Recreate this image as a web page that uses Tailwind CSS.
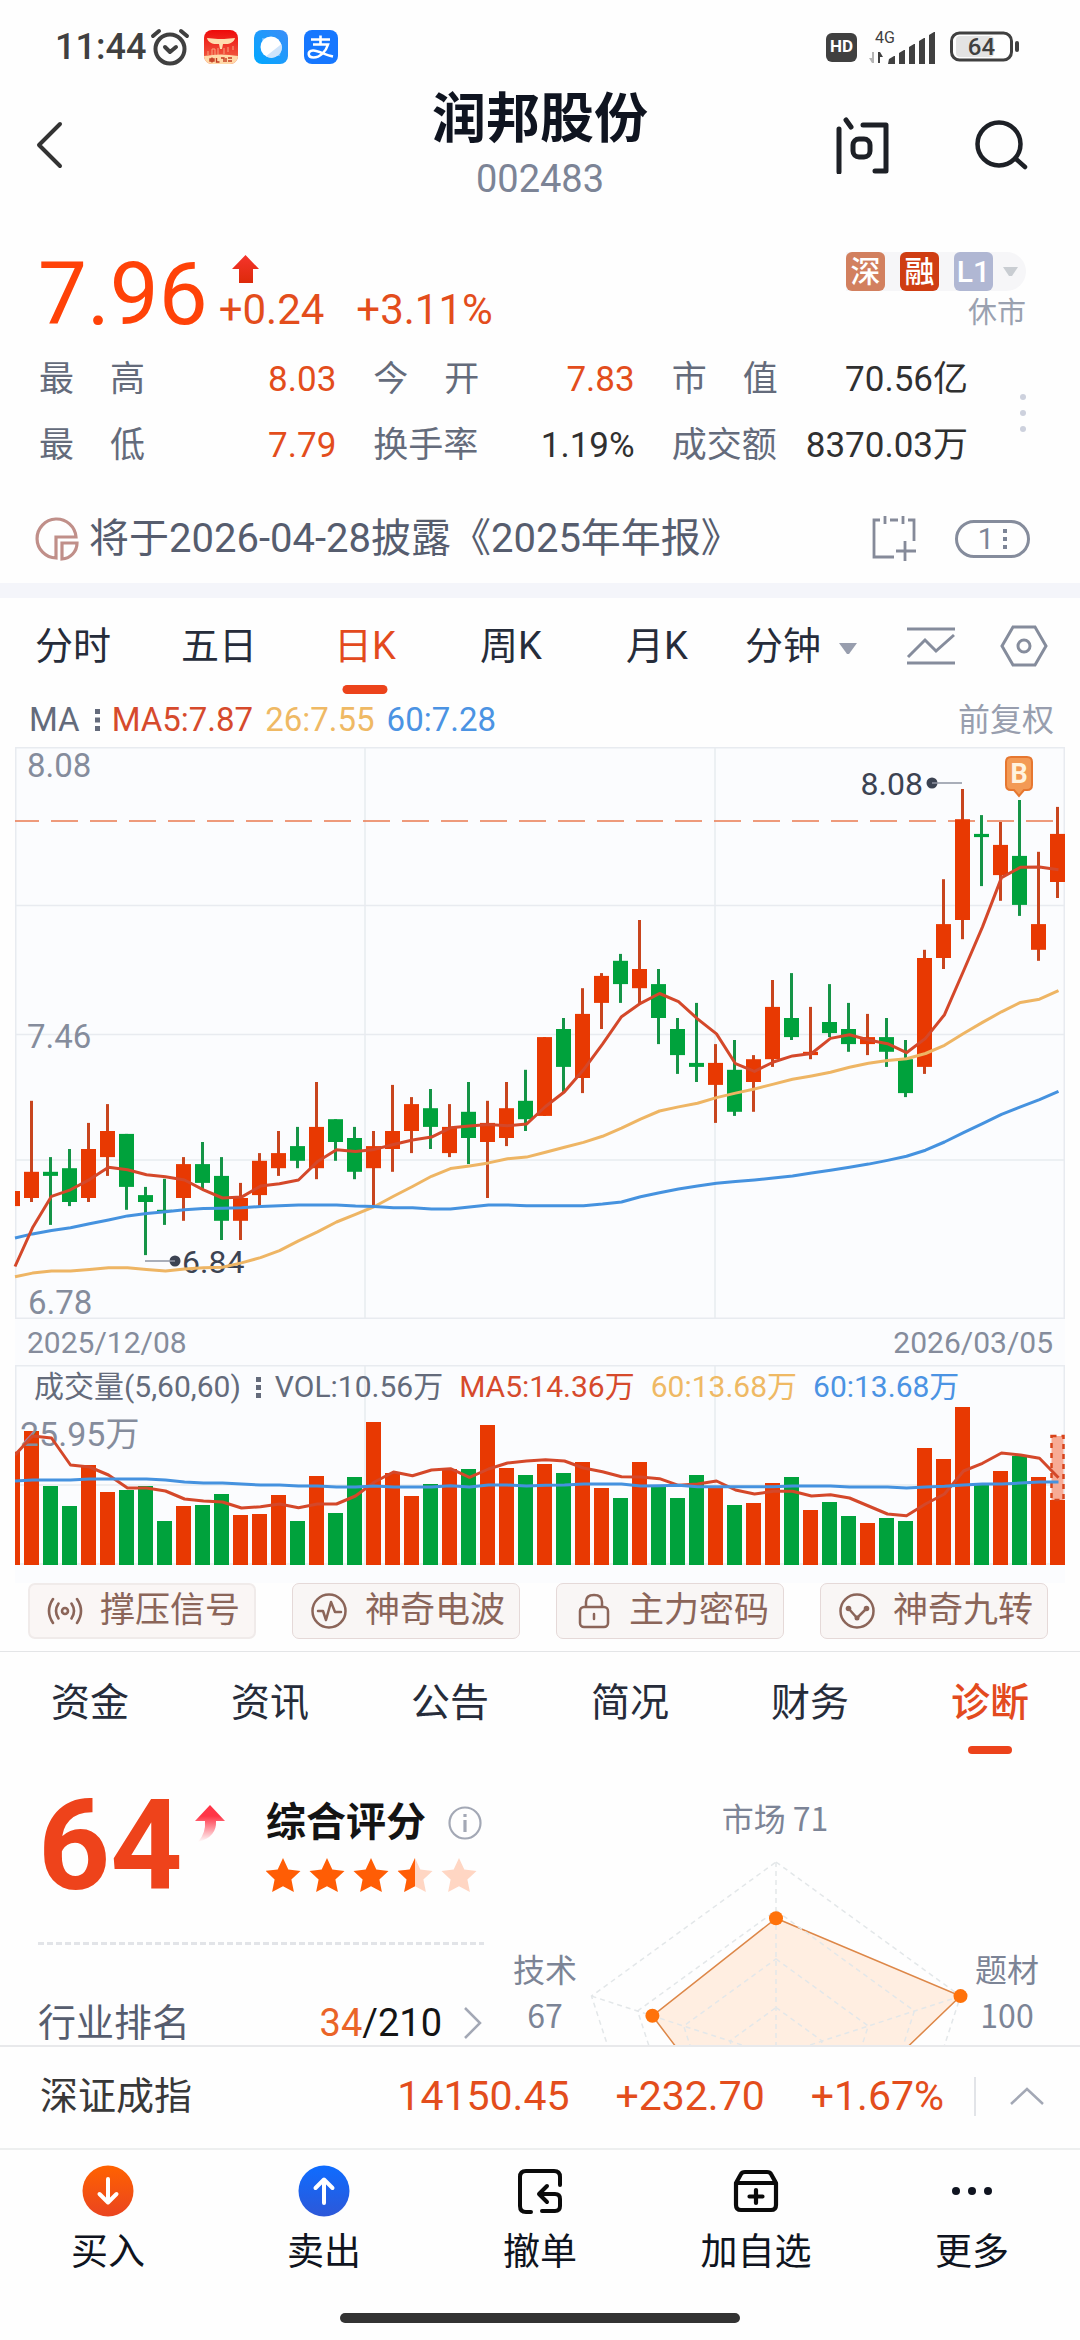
<!DOCTYPE html>
<html lang="zh-CN">
<head>
<meta charset="utf-8">
<meta name="viewport" content="width=device-width, initial-scale=1">
<title>润邦股份 002483</title>
<script src="https://cdn.jsdelivr.net/npm/@tailwindcss/browser@4"></script>
</head>
<body class="bg-[#fefefe] font-['Roboto','Noto_Sans_CJK_SC',sans-serif] text-[#262c3a]">
<div class="flex h-screen flex-col overflow-hidden">

  <!-- system status bar -->
  <div class="flex h-[85px] shrink-0 items-center justify-between pt-[9px] pr-[60px] pl-[55px] text-[#404040]">
    <div class="flex items-center">
      <span class="text-[36px] leading-[40px] font-medium">11:44</span>
      <svg class="ml-[4px] h-[38px] w-[40px]" viewBox="0 0 40 38" fill="none" stroke="#404040" stroke-width="4" stroke-linecap="round" stroke-linejoin="round"><circle cx="20" cy="21" r="14.5"/><path d="M15 19l5 5 6-5M3 8l6-5M37 8l-6-5"/></svg>
      <svg class="ml-[14px] h-[34px] w-[34px]" viewBox="0 0 34 34"><defs><linearGradient id="ga" x2="0" y2="1"><stop stop-color="#ee0a0a"/><stop offset="1" stop-color="#f06a4c"/></linearGradient><clipPath id="ca"><rect width="34" height="34" rx="8"/></clipPath></defs><g clip-path="url(#ca)"><path fill="url(#ga)" d="M0 0h34v34H0z"/><path fill="#ffdcae" d="M3 8l11 1h6l11-1c-1 4-5 6-9 6h-3l-1 5h-2l-1-5h-3C8 14 4 12 3 8z"/><path stroke="#f9a47e" fill="none" d="M4 25v-4M8 25v-6h3v6M14 25v-7M20 24v-6M24 22v-5M29 20v-4"/><path fill="#ffd9a8" d="M0 26q17-3 34 0v8H0z"/><path stroke="#c43a20" stroke-width="1.4" fill="none" d="M6 29h4v2H6zM8 27.500v5M12.500 28v4h3M17 28h3v4M22 28v4M24 28h4M24 31h4"/></g></svg>
      <svg class="ml-[16px] h-[34px] w-[34px]" viewBox="0 0 34 34"><defs><linearGradient id="gb" x1="0" y1="1" x2="1" y2="0"><stop stop-color="#00a8ff"/><stop offset="1" stop-color="#3c8df8"/></linearGradient></defs><rect width="34" height="34" rx="8" fill="url(#gb)"/><path fill="#5db8ff" d="M8 8h8v8H8zM18 18h9l-1 8h-8z"/><circle cx="17" cy="17" r="10.500" fill="#fff"/><path fill="#cfe4fb" d="M27.500 14A10.500 10.500 0 0 1 12 26.200z"/></svg>
      <svg class="ml-[16px] h-[34px] w-[34px]" viewBox="0 0 34 34"><rect width="34" height="34" rx="8" fill="#1677ff"/><path fill="none" stroke="#fff" stroke-width="2.600" d="M7 9.500h19M16.500 5.500V14M9 14.500h15c-2 7-8 13-14.500 13-6 0-6.500-6.500-.5-7 5-.3 12 4.500 20 6"/></svg>
    </div>
    <div class="flex items-center">
      <span class="flex h-[29px] w-[31px] items-center justify-center rounded-[6px] bg-[#404040] text-[17px] font-bold text-white">HD</span>
      <svg class="ml-[12px] h-[40px] w-[67px] overflow-visible" viewBox="0 -2 67 40"><text x="6" y="14" font-family="Roboto" font-size="16" fill="#404040">4G</text><path fill="#b5b5b5" d="M5 23v11H3l-3-5h3v-6z"/><path fill="#404040" d="M9 34V23h2l3 5h-3v6zM20 30l5-3h1v8h-7zM30 24l5-3h1v14h-6zM40 18l5-3h1v20h-6zM50 12l5-3h1v26h-6zM60 6l5-3h1v32h-6z"/></svg>
      <svg class="ml-[14px] h-[32px] w-[70px]" viewBox="0 0 70 32"><rect x="6" y="5" width="38" height="21" rx="4" fill="#e3e3e3"/><rect x="1.500" y="2" width="60" height="27" rx="8" fill="none" stroke="#404040" stroke-width="3"/><path stroke="#404040" stroke-width="4" stroke-linecap="round" d="M67 12v7"/><text x="31.500" y="24" text-anchor="middle" font-family="Roboto" font-size="24" font-weight="500" fill="#404040">64</text></svg>
    </div>
  </div>

  <!-- title bar -->
  <header class="grid h-[118px] shrink-0 grid-cols-[1fr_auto_1fr] items-center px-[50px]">
    <button type="button" aria-label="返回" class="-ml-3.5 justify-self-start"><svg class="h-[50px] w-[28px]" viewBox="0 0 28 50" fill="none" stroke="#333" stroke-width="4" stroke-linecap="round" stroke-linejoin="round"><path d="M24 4L3 25l21 21"/></svg></button>
    <div class="pt-[2px] text-center">
      <h1 class="text-[54px] leading-[66px] font-bold text-[#0f1420]">润邦股份</h1>
      <p class="text-[38px] leading-[52px] text-[#7c8496]">002483</p>
    </div>
    <div class="flex items-center gap-[82px] justify-self-end">
      <button type="button" aria-label="问答"><svg class="h-[58px] w-[56px]" viewBox="0 0 56 58" fill="none" stroke="#1d2026" stroke-width="5" stroke-linecap="round" stroke-linejoin="round"><path d="M5 13v43M12 4l5 7M29 9h23v46H41"/><rect x="19" y="23" width="17" height="18" rx="6"/></svg></button>
      <button type="button" aria-label="搜索"><svg class="h-[56px] w-[58px]" viewBox="0 0 58 56" fill="none" stroke="#1d2026" stroke-width="4.500" stroke-linecap="round"><circle cx="27" cy="27" r="21.500"/><path d="M44 42l9 8"/></svg></button>
    </div>
  </header>

  <!-- quote -->
  <section class="flex h-[142px] shrink-0 items-start justify-between pt-[47px] pr-[54px] pl-[38px]">
    <div class="flex items-end">
      <strong class="text-[87px] leading-[88px] font-normal text-[#ff4208]">7.96</strong>
      <div class="ml-[11px] flex flex-col gap-1 pb-[6px] text-[42px] leading-[44px] text-[#e34d1c]">
        <svg class="ml-[13px] h-[29px] w-[27px]" viewBox="0 0 27 29"><defs><linearGradient id="gc" x2="0" y2="1"><stop stop-color="#f5342c"/><stop offset="1" stop-color="#dd2a0a"/></linearGradient></defs><path fill="url(#gc)" d="M13.500 0L27 14h-6v14H7V14H0z"/></svg>
        <div class="flex gap-[32px]"><span>+0.24</span><span>+3.11%</span></div>
      </div>
    </div>
    <div class="flex flex-col items-end">
      <button type="button" class="mt-[2px] flex h-[39px] items-center gap-[15px] rounded-r-full bg-[#f6f6f8] pr-[8px] text-[30px] leading-[39px] font-medium text-white">
        <span class="size-[39px] rounded-[6px] bg-[#d2805f]">深</span>
        <span class="size-[39px] rounded-[6px] bg-[#cf3d12]">融</span>
        <span class="size-[39px] rounded-[6px] bg-[#b0b7d3]">L1</span>
        <svg class="-ml-[5px] h-[10px] w-[15px]" viewBox="0 0 15 10"><path fill="#c9cdd2" d="M0 0h15L9 9H6z"/></svg>
      </button>
      <span class="text-[29px] leading-[44px] text-[#9aa1b0]">休市</span>
    </div>
  </section>

  <section class="flex h-[132px] shrink-0 items-center pt-[4px] pr-[52px] pl-[39px]">
    <dl class="grid flex-1 grid-cols-[297fr_261fr_296fr] gap-x-[37px] text-[35px] leading-[66px] text-[#e34d1c]">
      <div class="flex justify-between"><dt class="flex w-[106px] justify-between text-[#646b7b]"><span>最</span><span>高</span></dt><dd>8.03</dd></div>
      <div class="flex justify-between"><dt class="flex w-[106px] justify-between text-[#646b7b]"><span>今</span><span>开</span></dt><dd>7.83</dd></div>
      <div class="flex justify-between"><dt class="flex w-[106px] justify-between text-[#646b7b]"><span>市</span><span>值</span></dt><dd class="text-[#303030]">70.56亿</dd></div>
      <div class="flex justify-between"><dt class="flex w-[106px] justify-between text-[#646b7b]"><span>最</span><span>低</span></dt><dd>7.79</dd></div>
      <div class="flex justify-between"><dt class="text-[#646b7b]">换手率</dt><dd class="text-[#303030]">1.19%</dd></div>
      <div class="flex justify-between"><dt class="text-[#646b7b]">成交额</dt><dd class="text-[#303030]">8370.03万</dd></div>
    </dl>
    <button type="button" aria-label="更多行情" class="ml-[50px] flex w-[10px] flex-col items-center gap-[10px]"><i class="size-[6px] rounded-full bg-[#cdd1dd]"></i><i class="size-[6px] rounded-full bg-[#cdd1dd]"></i><i class="size-[6px] rounded-full bg-[#cdd1dd]"></i></button>
  </section>

  <section class="flex h-[106px] shrink-0 items-center pt-[17px] pr-[50px] pl-[35px]">
    <svg class="h-[44px] w-[44px] shrink-0" viewBox="0 0 44 44" fill="none" stroke="#c08f89" stroke-width="3.200"><path d="M41 20A19.500 19.500 0 1 0 21 41V20z"/><path d="M27 26h15a16 16 0 0 1-15 16z"/></svg>
    <a href="#" class="ml-[10px] text-[40px] leading-[60px] whitespace-nowrap text-[#565d6e]">将于2026-04-28披露《2025年年报》</a>
    <button type="button" aria-label="添加日程" class="ml-auto"><svg class="h-[48px] w-[46px]" viewBox="0 0 46 48" fill="none" stroke="#858a99" stroke-width="2.800"><path d="M9 5H3v37h20M19 5h8M37 5h6v21M14 1v8M32 1v8M34 26v20M25 36h20"/></svg></button>
    <button type="button" aria-label="公告列表" class="ml-[38px] flex h-[38px] w-[75px] items-center justify-center gap-[9px] rounded-full border-[3px] border-[#858c9c] text-[29px] leading-[32px] text-[#7c8496]">1<svg class="h-[20px] w-[4px]" viewBox="0 0 4 20" fill="#7c8496"><path d="M0 0h4v4H0zM0 8h4v4H0zM0 16h4v4H0z"/></svg></button>
  </section>

  <div class="h-[15px] shrink-0 bg-[#f4f5fa]"></div>

  <!-- period tabs -->
  <nav class="grid h-[92px] shrink-0 grid-cols-[730fr_350fr] text-[38px] leading-[96px]">
    <div class="grid grid-cols-5 text-center">
      <button type="button">分时</button>
      <button type="button">五日</button>
      <button type="button" class="relative text-[#e34a1e]">日K<span class="absolute bottom-0 left-1/2 h-[9px] w-[45px] -translate-x-1/2 rounded-full bg-[#ec431b]"></span></button>
      <button type="button">周K</button>
      <button type="button">月K</button>
    </div>
    <div class="flex items-center justify-between pr-[32px] pl-[15px]">
      <button type="button" class="flex items-center gap-[18px]">分钟<svg class="mt-[6px] h-[12px] w-[18px]" viewBox="0 0 18 12"><path fill="#989eae" d="M0 0h18l-8 11H8z"/></svg></button>
      <button type="button" aria-label="画线" class="ml-[5px]"><svg class="h-[38px] w-[50px]" viewBox="0 0 50 38" fill="none" stroke="#858c9c" stroke-width="3"><path d="M1 2h48M1 36h48M2 30l17-17 11 11L48 8"/></svg></button>
      <button type="button" aria-label="设置"><svg class="h-[42px] w-[48px]" viewBox="0 0 48 42" fill="none" stroke="#858c9c" stroke-width="3"><path d="M13 2h22l11 19-11 19H13L2 21z"/><circle cx="24" cy="21" r="6"/></svg></button>
    </div>
  </nav>

  <div class="flex h-[57px] shrink-0 items-center justify-between pt-[3px] pr-[26px] pl-[29px] text-[33px] leading-[48px]">
    <div class="flex items-center gap-[12px]">
      <button type="button" class="flex items-center gap-[15px] text-[#646b7b]">MA<svg class="h-[22px] w-[5px]" viewBox="0 0 5 22" fill="#646b7b"><path d="M0 0h5v5H0zM0 8.500h5v5H0zM0 17h5v5H0z"/></svg></button>
      <span class="text-[#d64a2c]">MA5:7.87</span><span class="text-[#efb964]">26:7.55</span><span class="text-[#4b93e3]">60:7.28</span>
    </div>
    <button type="button" class="text-[32px] text-[#989eae]">前复权</button>
  </div>

  <!-- charts -->
  <section class="mx-[15px] shrink-0 bg-[#fbfcfe]">
    <svg id="kline" class="block w-full overflow-visible" viewBox="0 0 1050 572" font-family="Roboto">
      <g fill="none" stroke="#e8ebf0" stroke-width="1.500"><rect x=".75" y=".75" width="1048.500" height="570.500"/><path d="M0 158.500h1050M0 287.500h1050M0 413h1050M350 0v572M700 0v572"/></g>
      <g fill="#858c9c" font-size="33"><text x="12" y="30">8.08</text><text x="12" y="301">7.46</text><text x="13" y="567">6.78</text></g>
      <path d="M0 74h1050" stroke="#ea7a50" stroke-width="1.600" stroke-dasharray="27 12" stroke-dashoffset="3"/>
      <g id="candles"></g>
      <g fill="#3c4352"><circle cx="160" cy="514" r="5.500"/><text x="167" y="526" font-size="32">6.84</text><circle cx="917" cy="36" r="5.500"/><text x="908" y="48" font-size="32" text-anchor="end">8.08</text></g>
      <path d="M130 514h30M917 36h30" stroke="#8e94a2" stroke-width="1.600"/>
      <g id="averages" fill="none" stroke-width="3" stroke-linejoin="round"></g>
      <path fill="#f39a55" stroke="#e67730" stroke-width="2" d="M996 10h16q5 0 5 5v23q0 5-5 5h-3l-5 6-5-6h-3q-5 0-5-5V15q0-5 5-5z"/>
      <text x="1004" y="36" text-anchor="middle" font-size="27" font-weight="700" fill="#fff3df">B</text>
    </svg>
    <div class="flex h-[46px] items-center justify-between px-[12px] pt-[2px] text-[30px] leading-[44px] text-[#858c9c]"><time>2025/12/08</time><time>2026/03/05</time></div>
    <div class="relative pb-[18px]">
      <svg id="volume" class="block w-full" viewBox="0 0 1050 200" font-family="'Roboto','Noto Sans CJK SC'">
        <path fill="none" stroke="#e8ebf0" stroke-width="1.500" d="M.75 200V.75h1048.500V200M350 0v200M700 0v200M0 120h1050M0 199h1050"/>
        <g id="bars"></g>
        <text x="5" y="81" font-size="34" fill="#858c9c">25.95万</text>
        <g id="volaverages" fill="none" stroke-width="3" stroke-linejoin="round"></g>
      </svg>
      <div class="absolute top-[2px] left-[19px] flex items-center gap-[16px] text-[30px] leading-[40px] whitespace-nowrap">
        <button type="button" class="flex items-center gap-[15px] text-[#646b7b]">成交量(5,60,60)<svg class="-mr-[2px] h-[21px] w-[5px]" viewBox="0 0 5 21" fill="#646b7b"><path d="M0 0h5v5H0zM0 8h5v5H0zM0 16h5v5H0z"/></svg></button>
        <span class="text-[#646b7b]">VOL:10.56万</span><span class="text-[#d64a2c]">MA5:14.36万</span><span class="text-[#efb964]">60:13.68万</span><span class="text-[#4b93e3]">60:13.68万</span>
      </div>
    </div>
  </section>

  <div class="grid h-[69px] shrink-0 grid-cols-4 gap-[36px] border-b border-[#e4e5e7] pr-[32px] pl-[28px] pb-[14px] text-[35px] leading-[52px] text-[#8b6559]">
    <button type="button" class="flex items-center justify-between rounded-[7px] border-2 border-[#f0ebea] bg-[#faf6f5] pr-[14px] pl-[17px]"><svg class="h-[30px] w-[36px]" viewBox="0 0 36 30" fill="none" stroke="#8b6559" stroke-width="2.600" stroke-linecap="round"><circle cx="18" cy="15" r="3"/><path d="M11.500 7.500q-5 7.500 0 15M24.500 7.500q5 7.500 0 15M6 3q-8 12 0 24M30 3q8 12 0 24"/></svg>撑压信号</button>
    <button type="button" class="flex items-center justify-between rounded-[7px] border border-[#e5d9d8] bg-[#f9f6f5] pr-[14px] pl-[18px]"><svg class="h-[36px] w-[36px]" viewBox="0 0 36 36" fill="none" stroke="#8b6559" stroke-width="2.500" stroke-linecap="round" stroke-linejoin="round"><circle cx="18" cy="18" r="16.500"/><path d="M7 18h5l3 9 5-18 4 10h6"/></svg>神奇电波</button>
    <button type="button" class="flex items-center justify-between rounded-[7px] border border-[#e5d9d8] bg-[#f9f6f5] pr-[14px] pl-[21px]"><svg class="h-[36px] w-[32px]" viewBox="0 0 32 36" fill="none" stroke="#8b6559" stroke-width="2.500" stroke-linecap="round"><rect x="2" y="14" width="28" height="20" rx="4"/><path d="M8 13V9q0-7 8-7t8 7v4M16 21v5"/></svg>主力密码</button>
    <button type="button" class="flex items-center justify-between rounded-[7px] border border-[#e5d9d8] bg-[#f9f6f5] pr-[14px] pl-[18px]"><svg class="h-[36px] w-[36px]" viewBox="0 0 36 36" fill="none" stroke="#8b6559" stroke-width="2.500" stroke-linejoin="round"><circle cx="18" cy="18" r="16.500"/><path d="M10 16l8 9 9-9"/><g fill="#8b6559" stroke="none"><circle cx="9.500" cy="15.500" r="2.800"/><circle cx="18" cy="25" r="2.500"/><circle cx="27.500" cy="15.500" r="2.800"/></g></svg>神奇九转</button>
  </div>

  <!-- detail tabs -->
  <nav class="grid h-[100px] shrink-0 grid-cols-6 text-center text-[39px] leading-[102px]">
    <a href="#">资金</a><a href="#">资讯</a><a href="#">公告</a><a href="#">简况</a><a href="#">财务</a>
    <a href="#" class="relative font-medium text-[#e34a1e]">诊断<span class="absolute bottom-0 left-1/2 h-[8px] w-[44px] -translate-x-1/2 rounded-full bg-[#ec431b]"></span></a>
  </nav>

  <!-- diagnosis, cut off by the index bar -->
  <main class="grid min-h-0 flex-1 grid-cols-[484fr_596fr] overflow-hidden">
    <div class="flex min-w-0 flex-col pl-[38px]">
      <div class="flex pt-[40px]">
        <strong class="text-[126px] leading-[108px] font-bold text-[#ee431b]">64</strong>
        <svg class="mt-[13px] ml-[12px] h-[37px] w-[30px]" viewBox="0 0 30 37"><defs><linearGradient id="gd" x2="0" y2="1"><stop offset=".3" stop-color="#ff3547"/><stop offset="1" stop-color="#ff3547" stop-opacity="0"/></linearGradient></defs><path fill="url(#gd)" d="M15 0l15 16h-9q1 16-18 21 8-9 7-21H0z"/></svg>
        <div class="ml-auto w-[218px]">
          <div class="mt-[6px] flex items-center justify-between text-[40px] leading-[50px] font-bold text-[#141414]">综合评分<svg class="mr-[2px] h-[34px] w-[34px]" viewBox="0 0 34 34" fill="none" stroke="#a3a8b5" stroke-width="2.200"><circle cx="17" cy="17" r="15.500"/><path d="M17 14v12M17 8v3" stroke-width="3.200"/></svg></div>
          <svg class="mt-[10px] h-[38px] w-[216px]" viewBox="0 0 216 38"><defs><path id="star" d="M17 0l5.300 11.600 12.200 1.300-9.100 8.500 2.500 12.600L17 28.200 6.100 34l2.500-12.600L-.5 12.900l12.200-1.300z"/><clipPath id="half"><path d="M132 0h17v38h-17z"/></clipPath></defs><g fill="#ff5d05"><use href="#star"/><use href="#star" x="44"/><use href="#star" x="88"/></g><g fill="#ffd6c3"><use href="#star" x="132"/><use href="#star" x="176"/></g><g clip-path="url(#half)"><use href="#star" x="132" fill="#ff5d05"/></g></svg>
        </div>
      </div>
      <svg class="mt-[42px] h-[3px] w-full shrink-0"><path d="M0 1.500h2000" stroke="#e2e4e8" stroke-width="3" stroke-dasharray="6 3"/></svg>
      <a href="#" class="mt-[48px] flex items-center text-[38px] leading-[60px] text-[#565d6e]">行业排名<span class="ml-auto text-[#ea6428]">34</span><span class="text-[#141414]">/210</span><svg class="mr-[2px] ml-[22px] h-[32px] w-[18px] shrink-0" viewBox="0 0 18 32" fill="none" stroke="#a3a8b5" stroke-width="2.500"><path d="M1 1l15 15L1 31"/></svg></a>
    </div>
    <svg class="block w-full" viewBox="0 0 596 500" font-family="'Noto Sans CJK SC'" font-size="32" fill="#7c8496" text-anchor="middle">
      <g id="radar"></g>
      <text x="291" y="79">市场 71</text><text x="61" y="230">技术</text><text x="61" y="276">67</text><text x="523" y="230">题材</text><text x="523" y="276">100</text>
    </svg>
  </main>

  <!-- index bar -->
  <div class="flex h-[103px] shrink-0 items-center border-t-2 border-[#e8e9eb] bg-[#fefefe] pr-[36px] pb-[3px] pl-[40px] text-[41px] leading-[60px] text-[#e34d1c]">
    <span class="text-[38px] text-[#383838]">深证成指</span>
    <div class="ml-auto flex gap-[46px]"><span>14150.45</span><span>+232.70</span><span>+1.67%</span></div>
    <span class="ml-[30px] h-[39px] w-[2px] bg-[#e2e4e8]"></span>
    <button type="button" aria-label="展开指数" class="ml-[34px]"><svg class="h-[18px] w-[34px]" viewBox="0 0 34 18" fill="none" stroke="#a3a8b5" stroke-width="2.500"><path d="M1 17L17 2l16 15"/></svg></button>
  </div>

  <!-- trading bar -->
  <footer class="h-[192px] shrink-0 border-t-2 border-[#edefef] bg-[#fefefe]">
    <nav class="grid grid-cols-5 pt-[15px] text-[37px] leading-[72px] text-[#0f1420]">
      <button type="button" class="flex flex-col items-center"><svg class="h-[52px] w-[52px]" viewBox="0 0 52 52"><defs><linearGradient id="ge" x2="0" y2="1"><stop stop-color="#ff6200"/><stop offset="1" stop-color="#ea4420"/></linearGradient></defs><circle cx="26" cy="26" r="25.500" fill="url(#ge)"/><path fill="none" stroke="#fff" stroke-width="4" stroke-linecap="round" stroke-linejoin="round" d="M26 14v23M17.500 29l8.500 8.500 8.500-8.500"/></svg>买入</button>
      <button type="button" class="flex flex-col items-center"><svg class="h-[52px] w-[52px]" viewBox="0 0 52 52"><defs><linearGradient id="gf" x2="0" y2="1"><stop stop-color="#0e6cff"/><stop offset="1" stop-color="#2d58d8"/></linearGradient></defs><circle cx="26" cy="26" r="25.500" fill="url(#gf)"/><path fill="none" stroke="#fff" stroke-width="4" stroke-linecap="round" stroke-linejoin="round" d="M26 38V15M17.500 23l8.500-8.500 8.500 8.500"/></svg>卖出</button>
      <button type="button" class="flex flex-col items-center"><svg class="h-[52px] w-[52px]" viewBox="0 0 52 52" fill="none" stroke="#0a0a0a" stroke-width="4" stroke-linecap="round" stroke-linejoin="round"><path d="M46 20V12q0-6-6-6H12q-6 0-6 6v29q0 6 6 6h5M26 29h15q5 0 5 5v7q0 5-5 5H28M33 21l-8 8 8 8"/></svg>撤单</button>
      <button type="button" class="flex flex-col items-center"><svg class="h-[52px] w-[52px]" viewBox="0 0 52 52" fill="none" stroke="#0a0a0a" stroke-width="4.200" stroke-linecap="round" stroke-linejoin="round"><path d="M6 18L11 9q1-2 4-2h22q3 0 4 2l5 9v22q0 5-5 5H11q-5 0-5-5zM6 18h40M26 25v13M19.500 31.500h13"/></svg>加自选</button>
      <button type="button" class="flex flex-col items-center"><svg class="h-[52px] w-[52px]" viewBox="0 0 52 52" fill="#0f1420"><circle cx="10" cy="26" r="4"/><circle cx="26" cy="26" r="4"/><circle cx="42" cy="26" r="4"/></svg>更多</button>
    </nav>
    <div class="mx-auto mt-[24px] h-[10px] w-[37%] rounded-full bg-[#333]"></div>
  </footer>
</div>

<script>
const RED = '#e83902', GREEN = '#00a23c';
// one row per day: direction, high, body top, body bottom, low, volume top
const days = [
 ['R',884,1058,1122,1132,213],['G',1022,1058,1068,1188,378],['G',1002,1049,1132,1142,438],['R',938,1002,1122,1132,315],['R',892,958,1022,1068,396],
 ['G',965,965,1095,1151,390],['G',1095,1115,1132,1262,378],['G',1075,1151,1155,1188,483],['R',1022,1039,1122,1178,438],['G',985,1039,1085,1102,435],
 ['G',1022,1068,1178,1225,402],['R',1085,1122,1178,1225,465],['R',1012,1031,1115,1142,462],['R',958,1012,1049,1068,405],['G',948,995,1031,1049,483],
 ['R',838,948,1049,1076,348],['G',929,929,985,1031,459],['G',948,975,1058,1076,351],['R',958,995,1049,1142,186],['R',845,958,1002,1058,339],
 ['R',875,892,958,1012,408],['G',855,902,948,1002,372],['R',892,948,1012,1022,327],['G',838,911,975,1039,327],['R',884,938,985,1122,195],
 ['R',838,902,975,995,324],['G',808,884,929,958,345],['R',728,728,921,921,312],['G',681,708,801,865,339],['R',608,671,828,865,306],
 ['R',571,578,644,708,384],['G',524,541,598,644,414],['R',441,561,608,648,306],['G',561,598,681,745,375],['G',681,708,772,818,414],
 ['G',644,791,801,838,345],['R',745,791,845,938,384],['G',735,808,911,921,435],['R',772,782,838,911,429],['R',588,654,782,801,369],
 ['G',571,681,728,735,351],['R',654,764,772,782,450],['G',598,691,718,728,426],['G',644,708,745,764,468],['R',671,728,745,772,489],
 ['G',681,728,764,801,474],['G',735,782,865,875,483],['R',514,534,801,818,264],['R',341,451,534,561,297],['R',120,194,441,488,141],
 ['G',184,230,238,358,375],['R',201,257,331,394,333],['G',147,284,404,431,288],['R',274,451,514,541,351],['R',164,230,348,387,420]];
const x = i => 16.5 + 19 * i;
const y = v => +(v / 2.45 - 7).toFixed(1);
const vy = v => +(v / 3 - 5).toFixed(1);
const rect = (l, t, w, b, c) => `<rect x="${l}" y="${t}" width="${w}" height="${(b - t).toFixed(1)}" fill="${c}"/>`;
let candles = rect(0, y(1105), 5, y(1142), RED), bars = rect(0, vy(275), 5, 200, RED);
days.forEach(([d, h, t, b, l, v], i) => {
  const c = d === 'R' ? RED : GREEN, w = d === 'R' ? '#c8451e' : '#159447';
  candles += rect(x(i) - 1.5, y(h), 3, y(l), w) + rect(x(i) - 7.5, y(t), 15, y(b), c);
  bars += rect(x(i) - 7.5, vy(v), 15, 200, c);
});
bars += `<rect x="1036.500" y="${vy(228)}" width="12" height="64" fill="#f7ab95" stroke="#d8431a" stroke-width="2.500" stroke-dasharray="5 5"/>`;
document.getElementById('candles').innerHTML = candles;
document.getElementById('bars').innerHTML = bars;
const line = (f, vals, c) => `<polyline stroke="${c}" points="${vals.map((v, i) => (i ? x(i - 1) + 1 : 0) + ',' + f(v)).join(' ')}"/>`;
document.getElementById('averages').innerHTML =
 line(y, [1315,1306,1301,1301,1297,1293,1293,1297,1301,1296,1293,1292,1281,1268,1251,1227,1205,1181,1162,1143,1118,1094,1069,1050,1044,1036,1026,1022,1010,998,986,971,951,929,909,899,890,876,865,855,843,831,823,814,802,792,785,781,768,748,719,692,666,643,635,614], '#eeb564') +
 line(y, [1220,1210,1202,1195,1185,1176,1166,1160,1156,1151,1148,1147,1146,1143,1141,1139,1139,1139,1142,1143,1146,1146,1149,1149,1144,1139,1139,1141,1141,1141,1141,1137,1132,1119,1109,1100,1093,1086,1082,1078,1073,1068,1061,1054,1047,1039,1030,1020,1005,985,962,940,917,899,881,861], '#4592df') +
 line(y, [1290,1195,1118,1102,1077,1047,1053,1065,1070,1078,1102,1122,1120,1093,1087,1078,1033,1004,1008,1003,991,980,973,950,946,942,945,941,898,862,808,745,678,645,621,641,683,720,793,812,789,774,768,731,722,735,744,766,731,673,566,458,337,312,311,318], '#d4482a');
document.getElementById('volaverages').innerHTML =
 line(vy, [285,228,234,315,321,345,384,384,393,417,423,426,444,440,432,443,432,432,408,366,336,347,330,326,352,327,309,303,299,303,324,335,350,351,356,376,372,363,390,402,394,394,408,404,414,438,462,467,432,402,333,310,279,285,295,353], '#d4482a') +
 line(vy, [363,360,360,360,357,357,357,357,360,366,369,369,372,375,375,378,378,381,381,378,381,381,381,377,381,375,375,378,376,375,372,372,372,378,377,376,380,380,380,380,380,378,378,378,381,381,381,384,381,379,375,372,372,369,366,366], '#4592df');

// five-axis score chart
const cx = 292, cy = 304, R = 194;
const at = (k, r) => [cx + r * Math.sin(k * Math.PI * .4), cy - r * Math.cos(k * Math.PI * .4)].map(n => n.toFixed(1)).join(',');
const score = [.71, 1, .44, .4, .67];
const area = score.map((s, k) => at(k, s * R)).join(' ');
let net = '';
[1, .75, .5, .25].forEach(f => net += `<polygon points="${[0,1,2,3,4].map(k => at(k, f * R)).join(' ')}"/>`);
[0,1,2,3,4].forEach(k => net += `<polyline points="${cx},${cy} ${at(k, R)}"/>`);
let radar = `<polygon points="${area}" fill="#ffeee1" stroke="#dd8748" stroke-width="1.500"/><g fill="none" stroke="#e3e7e9" stroke-width="1.500" stroke-dasharray="5 4">${net}</g>`;
score.forEach((s, k) => { const [px, py] = at(k, s * R).split(','); radar += `<circle cx="${px}" cy="${py}" r="7" fill="#ff720a"/>`; });
document.getElementById('radar').innerHTML = radar;
</script>
</body>
</html>
